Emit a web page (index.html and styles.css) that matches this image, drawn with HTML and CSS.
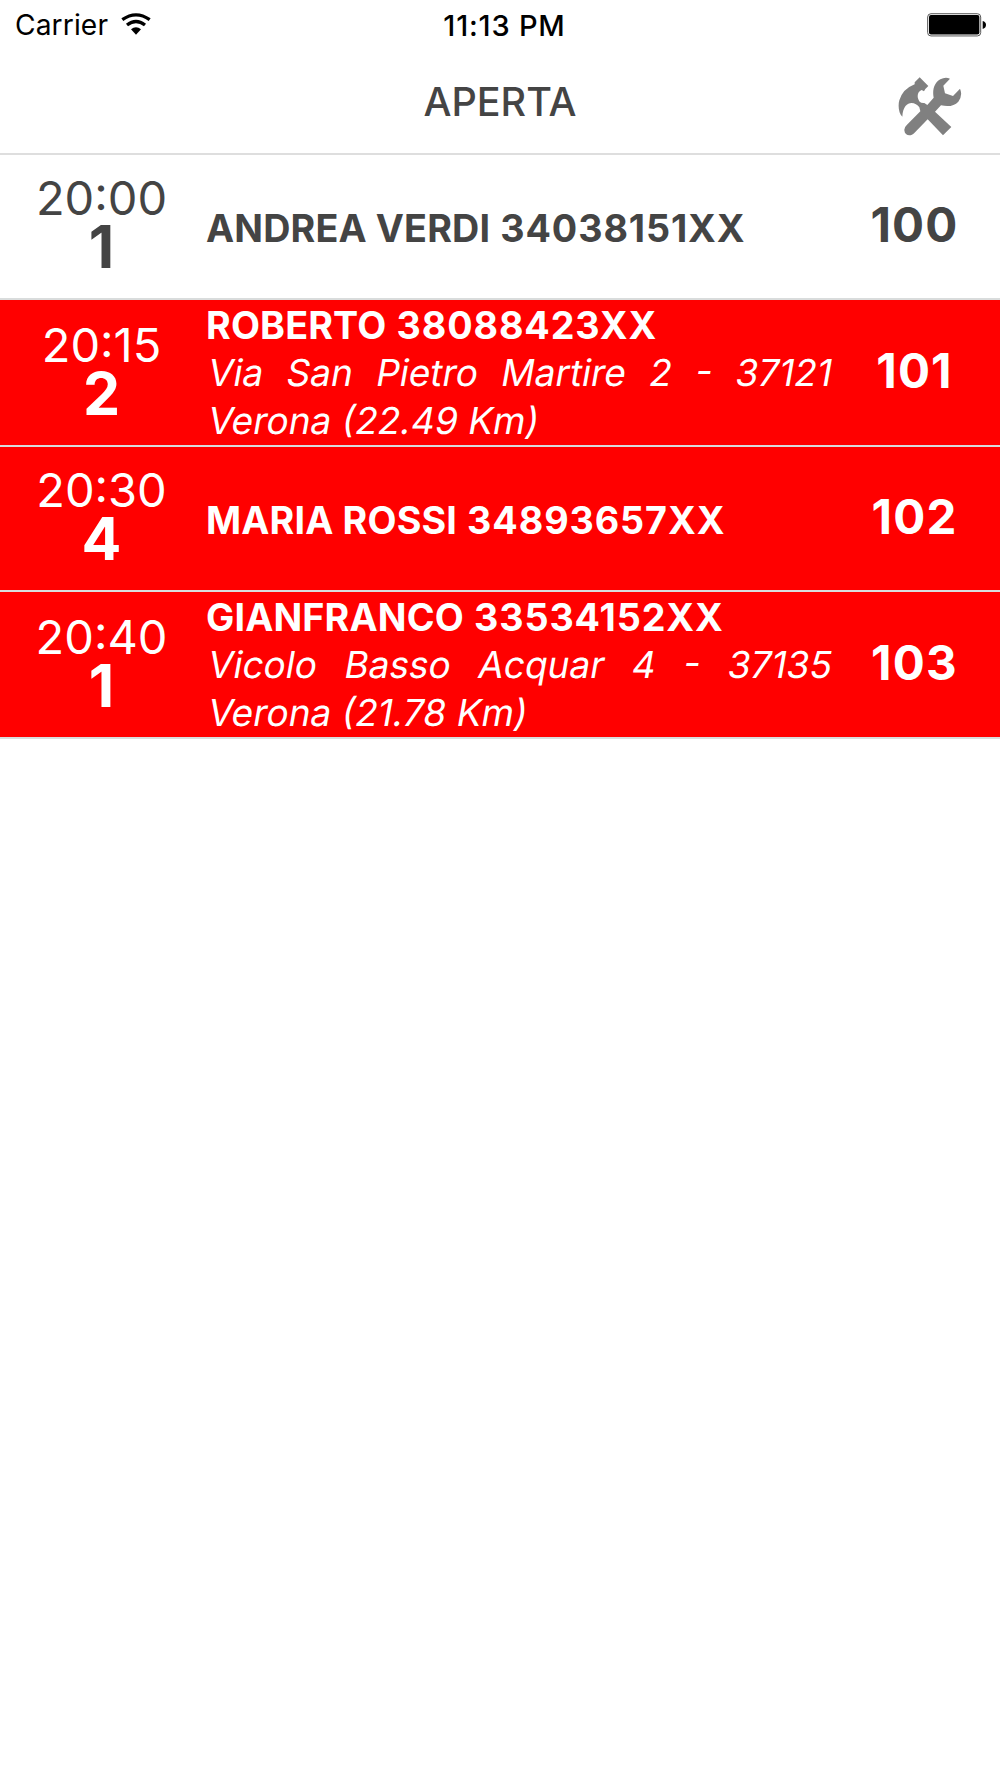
FILE: index.html
```html
<!DOCTYPE html>
<html lang="it">
<head>
  <meta charset="UTF-8">
  <meta name="viewport" content="width=device-width, initial-scale=1.0">
  <title>Aperta</title>
  <link rel="stylesheet" href="styles.css">
</head>
<body>
  <div class="status">
    <div class="carrier">
      <span>Carrier</span>
      <svg class="wifi" viewBox="0 0 90 66">
        <path d="M4 20 Q45 -9 86 20" fill="none" stroke="#000" stroke-width="10"/>
        <path d="M18 36 Q45 15 72 36" fill="none" stroke="#000" stroke-width="10"/>
        <path d="M30 49 Q45 37 60 49 L45 65 Z"/>
      </svg>
    </div>
    <div class="clock">11:13 PM</div>
    <svg class="battery" viewBox="0 0 178 72">
      <rect x="2" y="2" width="160" height="67" rx="10" fill="#fff" stroke="#555" stroke-width="3"/>
      <rect x="6" y="6" width="152" height="59" rx="6"/>
      <path d="M168 24 Q178 27 178 36 Q178 45 168 48 Z"/>
    </svg>
  </div>
  <header class="header">
    <h1>APERTA</h1>
    <svg class="tools" viewBox="54 230 192 177">
      <path d="M119 231 L145 257 L136 266 L132 273 L125 269 C112 274 109 290 119 304 Q124 309 133 308 L142 314 L161 292 C156 268 164 246 181 237 Q196 229 210 235 L190 256 L195 279 L219 287 L240 265 Q249 285 235 304 Q217 323 183 315 L165 334 L214 380 L189 405 L143 357 L103 398 C92 410 74 406 73 390 Q72 381 81 373 L121 333 L118 321 C105 302 70 298 67 349 C57 340 53 317 58 300 Q68 266 104 252 L104 246 Z"/>
    </svg>
  </header>
  <main class="orders">
    <div class="order">
      <div class="when"><div class="time">20:00</div><div class="qty">1</div></div>
      <div class="who"><b>ANDREA VERDI <span class="phone">34038151XX</span></b></div>
      <div class="num">100</div>
    </div>
    <div class="order late delivery">
      <div class="when"><div class="time">20:15</div><div class="qty">2</div></div>
      <div class="who">
        <b>ROBERTO <span class="phone">38088423XX</span></b>
        <div class="street">Via San Pietro Martire 2 - 37121</div>
        <div class="city">Verona (22.49 Km)</div>
      </div>
      <div class="num">101</div>
    </div>
    <div class="order late">
      <div class="when"><div class="time">20:30</div><div class="qty">4</div></div>
      <div class="who"><b>MARIA ROSSI <span class="phone">34893657XX</span></b></div>
      <div class="num">102</div>
    </div>
    <div class="order late delivery">
      <div class="when"><div class="time">20:40</div><div class="qty">1</div></div>
      <div class="who">
        <b>GIANFRANCO <span class="phone">33534152XX</span></b>
        <div class="street">Vicolo Basso Acquar 4 - 37135</div>
        <div class="city">Verona (21.78 Km)</div>
      </div>
      <div class="num">103</div>
    </div>
  </main>
</body>
</html>
```
FILE: styles.css
```css
* { box-sizing: border-box; }
body { margin: 0; background: #fff; color: #444; font-family: Inter, "Liberation Sans", sans-serif; }
.status { display: grid; grid-template-columns: 1fr auto 1fr; height: 50px; padding: 0 14px 0 15px; color: #000; font-size: 28.2px; line-height: 51px; }
.carrier { display: flex; letter-spacing: 0.1px; }
.wifi { width: 30px; height: 22px; margin: 13px 0 0 13px; }
.clock { font-size: 29px; font-weight: 500; padding-left: 8px; letter-spacing: 0.8px; }
.battery { width: 59px; height: 24px; margin-top: 13px; justify-self: end; }
.header { display: grid; grid-template-columns: 1fr auto 1fr; height: 105px; border-bottom: 2px solid #dedede; }
.header h1 { grid-column: 2; margin: 0; font-size: 39.5px; font-weight: 500; line-height: 105px; }
.tools { width: 64px; height: 59px; margin: 27px 38px 0 0; justify-self: end; fill: #808080; }
.order { display: grid; grid-template-columns: 206px 626px 1fr; align-items: center; height: 144.5px; border-bottom: 2px solid #d9dcdc; }
.delivery { height: 147.5px; }
.late { background: #f00; color: #fff; }
.when { padding: 0 3px 4px 0; text-align: center; }
.time { font-size: 47px; font-weight: 400; line-height: 46px; }
.qty { font-size: 59px; font-weight: 700; line-height: 52px; }
.who { padding-top: 4px; font-size: 37.7px; line-height: 48.4px; }
.who b { display: block; font-weight: 700; letter-spacing: 0.15px; }
.delivery .who { padding-top: 2px; }
.delivery b { line-height: 47.5px; }
.phone { margin-left: 1px; letter-spacing: 0.9px; }
/* slanted roman rather than the cursive italic */
.street, .city { font-size: 37px; font-weight: 400; transform: skewX(-10deg); transform-origin: 0 38px; }
.street { margin-right: 2px; text-align-last: justify; }
.num { padding: 0 3px 4px 0; font-size: 47.5px; font-weight: 700; letter-spacing: 1.2px; text-align: center; }
```
